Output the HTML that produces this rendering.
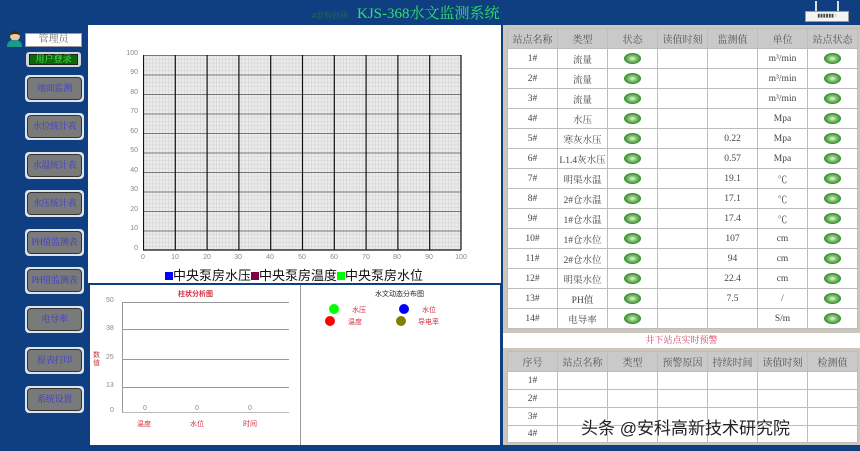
<!DOCTYPE html>
<html><head><meta charset="utf-8"><style>
*{margin:0;padding:0;box-sizing:border-box}
body{width:860px;height:451px;background:#0f3f80;position:relative;overflow:hidden;font-family:"Liberation Serif","Noto Serif CJK SC",serif}
.a{position:absolute}
.btn{position:absolute;left:25px;width:59px;height:27px;background:#dde3ea;border-radius:4px;padding:2px}
.btn div{width:100%;height:100%;background:#7a7a7a;border:1px solid #333;border-radius:4px;color:#3b3bd0;font-size:9px;text-align:center;line-height:21px;white-space:nowrap;overflow:hidden;letter-spacing:-0.3px}
table{border-collapse:collapse;table-layout:fixed}
td,th{border:1px solid #bdbdbd;font-weight:normal;text-align:center;font-size:9.5px;color:#444;overflow:hidden;white-space:nowrap}
th{background:#c9c9c9;color:#555;font-size:10px}
.led{display:inline-block;width:17px;height:11px;border-radius:50%;background:radial-gradient(ellipse at center,#e8f5e0 0%,#8cc87a 30%,#2f8a2a 70%,#1d5e1a 100%);vertical-align:middle}
.yl{position:absolute;font-family:"Liberation Sans",sans-serif;font-size:7px;color:#888;text-align:right;width:20px}
.xl{position:absolute;font-family:"Liberation Sans",sans-serif;font-size:7px;color:#888;width:20px;text-align:center}
</style></head><body>
<div class="a" style="left:312px;top:10px;font-size:8px;color:#2a6a50">#安科创研</div>
<div class="a" style="left:357px;top:2px;font-size:15px;color:#2fe06a;font-family:'Liberation Serif','Noto Serif CJK SC',serif;white-space:nowrap">KJS-368水文监测系统</div>
<div class="a" style="left:805px;top:1px;width:44px;height:22px">
<div class="a" style="left:10px;top:0;width:2px;height:10px;background:#ddd"></div>
<div class="a" style="left:32px;top:0;width:2px;height:10px;background:#ddd"></div>
<div class="a" style="left:0;top:10px;width:44px;height:11px;background:#f4f4f4;border:1px solid #999;font-size:5px;line-height:9px;color:#444;text-align:center">▮▮▮▮▮▮ ⁝</div></div>
<div class="a" style="left:10px;top:31px;width:10px;height:10px;border-radius:50%;background:#f0c89a;border-top:3px solid #3a2a1a"></div>
<div class="a" style="left:7px;top:40px;width:15px;height:7px;border-radius:6px 6px 0 0;background:#1a9a8a"></div>
<div class="a" style="left:25px;top:33px;width:57px;height:14px;background:#fff;border:1px solid #999;font-size:10px;color:#666;text-align:center;line-height:12px">管理员</div>
<div class="a" style="left:26px;top:52px;width:55px;height:15px;background:#cfd6de;border-radius:3px;padding:2px 3px"><div style="background:#0a6a0a;border:1px solid #222;height:11px;color:#5dff5d;font-size:9px;text-align:center;line-height:9px">用户登录</div></div>
<div class="btn" style="top:75px"><div>地面监测</div></div>
<div class="btn" style="top:113px"><div>水位统计表</div></div>
<div class="btn" style="top:152px"><div>水温统计表</div></div>
<div class="btn" style="top:190px"><div>水压统计表</div></div>
<div class="btn" style="top:229px"><div>PH值监测表</div></div>
<div class="btn" style="top:267px"><div>PH值监测表</div></div>
<div class="btn" style="top:306px"><div>电导率</div></div>
<div class="btn" style="top:347px"><div>报表打印</div></div>
<div class="btn" style="top:386px"><div>系统设置</div></div>
<div class="a" style="left:88px;top:25px;width:413px;height:258px;background:#fff">
<svg class="a" style="left:55px;top:30px" width="320" height="197" viewBox="0 0 320 197">
<defs>
<pattern id="mn" width="3.18" height="3.9" patternUnits="userSpaceOnUse"><rect width="3.18" height="3.9" fill="#ebebeb"/><path d="M0 0V3.9M0 0H3.18" stroke="#bdbdbd" stroke-width="0.6"/></pattern>
</defs>
<rect x="0" y="0" width="318" height="195" fill="url(#mn)"/>
<g stroke="#777" stroke-width="1">
<path d="M0 0.5H318M0 20H318M0 39.5H318M0 59H318M0 78.5H318M0 98H318M0 117.5H318M0 137H318M0 156.5H318M0 176H318"/></g>
<g stroke="#111" stroke-width="1.2">
<path d="M0.5 0V195M32.3 0V195M64.1 0V195M95.9 0V195M127.7 0V195M159.5 0V195M191.3 0V195M223.1 0V195M254.9 0V195M286.7 0V195M318 0V195"/>
<path d="M0 195H318"/></g>
</svg>
<div class="yl" style="left:30px;top:25px">100</div><div class="yl" style="left:30px;top:44px">90</div><div class="yl" style="left:30px;top:64px">80</div><div class="yl" style="left:30px;top:83px">70</div><div class="yl" style="left:30px;top:103px">60</div><div class="yl" style="left:30px;top:122px">50</div><div class="yl" style="left:30px;top:142px">40</div><div class="yl" style="left:30px;top:161px">30</div><div class="yl" style="left:30px;top:181px">20</div><div class="yl" style="left:30px;top:200px">10</div><div class="yl" style="left:30px;top:220px">0</div>
<div class="xl" style="left:45px;top:229px">0</div><div class="xl" style="left:77px;top:229px">10</div><div class="xl" style="left:109px;top:229px">20</div><div class="xl" style="left:140px;top:229px">30</div><div class="xl" style="left:172px;top:229px">40</div><div class="xl" style="left:204px;top:229px">50</div><div class="xl" style="left:236px;top:229px">60</div><div class="xl" style="left:268px;top:229px">70</div><div class="xl" style="left:299px;top:229px">80</div><div class="xl" style="left:331px;top:229px">90</div><div class="xl" style="left:363px;top:229px">100</div>
<div class="a" style="left:77px;top:240px;font-size:13px;font-family:'Liberation Sans','Noto Sans CJK SC',sans-serif;color:#111;white-space:nowrap"><span style="display:inline-block;width:8px;height:8px;background:#0000ff"></span>中央泵房水压<span style="display:inline-block;width:8px;height:8px;background:#800040"></span>中央泵房温度<span style="display:inline-block;width:8px;height:8px;background:#00ff00"></span>中央泵房水位</div>
</div>
<div class="a" style="left:90px;top:285px;width:210px;height:160px;background:#fff;font-family:'Liberation Sans','Noto Sans CJK SC',sans-serif">
<div class="a" style="left:88px;top:4px;font-size:7px;color:#d03040;font-weight:bold">柱状分析图</div>
<div class="a" style="left:32px;top:17px;width:1px;height:110px;background:#999"></div>
<div class="a" style="left:32px;top:17px;width:167px;height:1px;background:#999"></div>
<div class="a" style="left:32px;top:44px;width:167px;height:1px;background:#999"></div>
<div class="a" style="left:32px;top:74px;width:167px;height:1px;background:#999"></div>
<div class="a" style="left:32px;top:102px;width:167px;height:1px;background:#999"></div>
<div class="a" style="left:32px;top:127px;width:167px;height:1px;background:#bbb"></div>
<div class="a" style="left:16px;top:12px;font-size:7px;color:#888">50</div><div class="a" style="left:16px;top:40px;font-size:7px;color:#888">38</div><div class="a" style="left:16px;top:69px;font-size:7px;color:#888">25</div><div class="a" style="left:16px;top:97px;font-size:7px;color:#888">13</div><div class="a" style="left:20px;top:122px;font-size:7px;color:#888">0</div>
<div class="a" style="left:3px;top:67px;font-size:7px;color:#d03040;width:8px;line-height:8px">数值</div>
<div class="a" style="left:53px;top:120px;font-size:7px;color:#888">0</div><div class="a" style="left:105px;top:120px;font-size:7px;color:#888">0</div><div class="a" style="left:158px;top:120px;font-size:7px;color:#888">0</div>
<div class="a" style="left:47px;top:134px;font-size:7px;color:#d03040">温度</div><div class="a" style="left:100px;top:134px;font-size:7px;color:#d03040">水位</div><div class="a" style="left:153px;top:134px;font-size:7px;color:#d03040">时间</div>
</div>
<div class="a" style="left:300px;top:285px;width:200px;height:160px;background:#fff;border-left:1px solid #999;font-family:'Liberation Sans','Noto Sans CJK SC',sans-serif">
<div class="a" style="left:74px;top:4px;font-size:7px;color:#222">水文动态分布图</div>
<div class="a" style="left:28px;top:19px;width:10px;height:10px;border-radius:50%;background:#00ff00"></div><div class="a" style="left:51px;top:20px;font-size:7px;color:#d03040">水压</div>
<div class="a" style="left:98px;top:19px;width:10px;height:10px;border-radius:50%;background:#0000ff"></div><div class="a" style="left:121px;top:20px;font-size:7px;color:#d03040">水位</div>
<div class="a" style="left:24px;top:31px;width:10px;height:10px;border-radius:50%;background:#ff0000"></div><div class="a" style="left:47px;top:32px;font-size:7px;color:#d03040">温度</div>
<div class="a" style="left:95px;top:31px;width:10px;height:10px;border-radius:50%;background:#808000"></div><div class="a" style="left:117px;top:32px;font-size:7px;color:#d03040">导电率</div>
</div>
<div class="a" style="left:503px;top:25px;width:357px;height:308px;background:#cdc6bd;padding:3px 3px 3px 4px">
<table style="width:350px;background:#fff">
<colgroup><col span="7" style="width:50px"></colgroup>
<tr style="height:20px"><th>站点名称</th><th>类型</th><th>状态</th><th>读值时刻</th><th>监测值</th><th>单位</th><th>站点状态</th></tr>
<tr style="height:20px"><td>1#</td><td>流量</td><td><i class="led"></i></td><td></td><td></td><td>m³/min</td><td><i class="led"></i></td></tr>
<tr style="height:20px"><td>2#</td><td>流量</td><td><i class="led"></i></td><td></td><td></td><td>m³/min</td><td><i class="led"></i></td></tr>
<tr style="height:20px"><td>3#</td><td>流量</td><td><i class="led"></i></td><td></td><td></td><td>m³/min</td><td><i class="led"></i></td></tr>
<tr style="height:20px"><td>4#</td><td>水压</td><td><i class="led"></i></td><td></td><td></td><td>Mpa</td><td><i class="led"></i></td></tr>
<tr style="height:20px"><td>5#</td><td>寒灰水压</td><td><i class="led"></i></td><td></td><td>0.22</td><td>Mpa</td><td><i class="led"></i></td></tr>
<tr style="height:20px"><td>6#</td><td>L1.4灰水压</td><td><i class="led"></i></td><td></td><td>0.57</td><td>Mpa</td><td><i class="led"></i></td></tr>
<tr style="height:20px"><td>7#</td><td>明渠水温</td><td><i class="led"></i></td><td></td><td>19.1</td><td>℃</td><td><i class="led"></i></td></tr>
<tr style="height:20px"><td>8#</td><td>2#仓水温</td><td><i class="led"></i></td><td></td><td>17.1</td><td>℃</td><td><i class="led"></i></td></tr>
<tr style="height:20px"><td>9#</td><td>1#仓水温</td><td><i class="led"></i></td><td></td><td>17.4</td><td>℃</td><td><i class="led"></i></td></tr>
<tr style="height:20px"><td>10#</td><td>1#仓水位</td><td><i class="led"></i></td><td></td><td>107</td><td>cm</td><td><i class="led"></i></td></tr>
<tr style="height:20px"><td>11#</td><td>2#仓水位</td><td><i class="led"></i></td><td></td><td>94</td><td>cm</td><td><i class="led"></i></td></tr>
<tr style="height:20px"><td>12#</td><td>明渠水位</td><td><i class="led"></i></td><td></td><td>22.4</td><td>cm</td><td><i class="led"></i></td></tr>
<tr style="height:20px"><td>13#</td><td>PH值</td><td><i class="led"></i></td><td></td><td>7.5</td><td>/</td><td><i class="led"></i></td></tr>
<tr style="height:20px"><td>14#</td><td>电导率</td><td><i class="led"></i></td><td></td><td></td><td>S/m</td><td><i class="led"></i></td></tr>
</table></div>
<div class="a" style="left:503px;top:333px;width:357px;height:15px;background:#fff;text-align:center;font-size:9px;color:#d04060;line-height:15px">井下站点实时预警</div>
<div class="a" style="left:503px;top:348px;width:357px;height:97px;background:#cdc6bd;padding:3px 3px 3px 4px">
<table style="width:350px;background:#fff">
<colgroup><col span="7" style="width:50px"></colgroup>
<tr style="height:20px"><th>序号</th><th>站点名称</th><th>类型</th><th>预警原因</th><th>持续时间</th><th>读值时刻</th><th>检测值</th></tr>
<tr style="height:18px"><td>1#</td><td></td><td></td><td></td><td></td><td></td><td></td></tr>
<tr style="height:18px"><td>2#</td><td></td><td></td><td></td><td></td><td></td><td></td></tr>
<tr style="height:18px"><td>3#</td><td></td><td></td><td></td><td></td><td></td><td></td></tr>
<tr style="height:17px"><td>4#</td><td></td><td></td><td></td><td></td><td></td><td></td></tr>
</table></div>
<div class="a" style="left:581px;top:414px;font-size:17px;color:#222;font-family:'Liberation Sans','Noto Sans CJK SC',sans-serif;white-space:nowrap;text-shadow:0 0 2px #fff">头条 @安科高新技术研究院</div>
</body></html>
